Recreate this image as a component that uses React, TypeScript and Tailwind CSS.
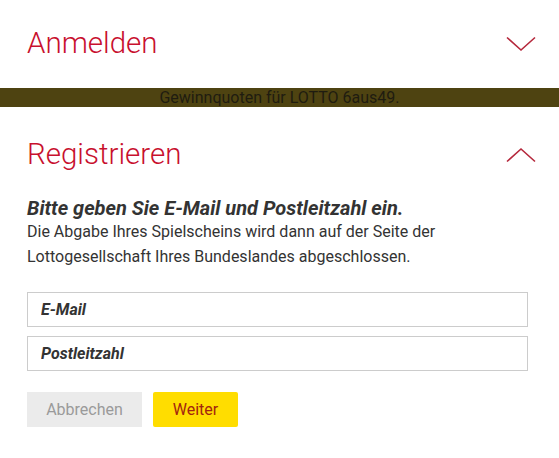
export default function App() {
  return (
    <div className="w-[559px] h-[458px] bg-white overflow-hidden font-['Roboto',sans-serif]">
      {/* Anmelden accordion header */}
      <div className="h-[88px] flex items-center justify-between pl-[27px] pr-[23px]">
        <h2 className="text-[29.5px] font-light text-[#c8102e] leading-none">Anmelden</h2>
        <Chevron dir="down" />
      </div>

      {/* Info band */}
      <div className="h-[19px] bg-[#4e4311] flex items-center justify-center">
        <span className="text-[16px] text-[#1f1c10] leading-none">Gewinnquoten für LOTTO 6aus49.</span>
      </div>

      {/* Registrieren accordion */}
      <div className="h-[96px] flex items-center justify-between pl-[27px] pr-[23px]">
        <h2 className="text-[29.5px] font-light text-[#c8102e] leading-none">Registrieren</h2>
        <Chevron dir="up" />
      </div>

      <div className="pl-[27px] pr-[31px] -mt-[6px]">
        <p className="text-[20px] font-bold italic text-[#333] leading-[22px]">
          Bitte geben Sie E-Mail und Postleitzahl ein.
        </p>
        <p className="text-[16px] text-[#333] leading-[25px]">
          Die Abgabe Ihres Spielscheins wird dann auf der Seite der
          <br />
          Lottogesellschaft Ihres Bundeslandes abgeschlossen.
        </p>

        <div className="mt-[23px] flex flex-col gap-[9px]">
          <input
            className="h-[35px] w-full border border-[#cccccc] px-[13px] text-[16px] font-bold italic text-[#333] placeholder:text-[#333] outline-none"
            placeholder="E-Mail"
          />
          <input
            className="h-[35px] w-full border border-[#cccccc] px-[13px] text-[16px] font-bold italic text-[#333] placeholder:text-[#333] outline-none"
            placeholder="Postleitzahl"
          />
        </div>

        <div className="mt-[21px] flex gap-[11px]">
          <button className="h-[35px] w-[115px] bg-[#ebebeb] text-[16px] text-[#9a9a9a]">Abbrechen</button>
          <button className="h-[35px] w-[85px] bg-[#ffdd00] rounded-[2px] text-[16px] text-[#a3240f]">Weiter</button>
        </div>
      </div>
    </div>
  );
}

function Chevron({ dir }: { dir: "up" | "down" }) {
  return (
    <svg width="30" height="16" viewBox="0 0 30 16" fill="none" stroke="#b5283c" strokeWidth={1.6}>
      {dir === "down" ? <path d="M1 1.5l14 12.5 14-12.5" /> : <path d="M1 14.5l14-12.5 14 12.5" />}
    </svg>
  );
}
